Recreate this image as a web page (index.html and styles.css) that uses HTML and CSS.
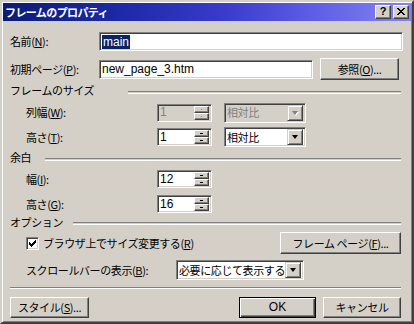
FILE: index.html
```html
<!DOCTYPE html>
<html lang="ja">
<head>
<meta charset="utf-8">
<title>フレームのプロパティ</title>
<link rel="stylesheet" href="styles.css">
</head>
<body>
<div class="win">
  <div class="title">
    <span class="ttext">フレームのプロパティ</span>
    <div class="tbtns">
      <span class="tb q">?</span>
      <span class="tb">
        <svg width="8" height="7" viewBox="0 0 8 7"><path d="M0 0h2v1h-2zM6 0h2v1h-2zM1 1h2v1h-2zM5 1h2v1h-2zM2 2h4v1h-4zM3 3h2v1h-2zM2 4h4v1h-4zM1 5h2v1h-2zM5 5h2v1h-2zM0 6h2v1h-2zM6 6h2v1h-2z" fill="#000"/></svg>
      </span>
    </div>
  </div>
  <div class="body">
    <div class="row r1">
      <span class="lbl w-a">名前(<u>N</u>):</span>
      <div class="field f-name"><span class="sel lat">main</span></div>
    </div>
    <div class="row r2">
      <span class="lbl w-a">初期ページ(<u>P</u>):</span>
      <div class="field f-page"><span class="lat">new_page_3.htm</span></div>
      <div class="btn b-browse">参照(<u>O</u>)...</div>
    </div>
    <div class="hdr h1"><span class="htext">フレームのサイズ</span><i class="etch e1"></i></div>
    <div class="row r3">
      <span class="lbl ind w-b">列幅(<u>W</u>):</span>
      <div class="spin dis">
        <span class="lat">1</span>
        <div class="arrows"><i class="ab"><b></b></i><i class="ab dn"><b></b></i></div>
      </div>
      <div class="combo dis c-rel">
        <span class="ctext">相対比</span>
        <i class="cbtn"><b></b></i>
      </div>
    </div>
    <div class="row r4">
      <span class="lbl ind w-b">高さ(<u>T</u>):</span>
      <div class="spin">
        <span class="lat">1</span>
        <div class="arrows"><i class="ab"><b></b></i><i class="ab dn"><b></b></i></div>
      </div>
      <div class="combo c-rel">
        <span class="ctext">相対比</span>
        <i class="cbtn"><b></b></i>
      </div>
    </div>
    <div class="hdr h2"><span class="htext">余白</span><i class="etch e2"></i></div>
    <div class="row r5">
      <span class="lbl ind w-b">幅(<u>I</u>):</span>
      <div class="spin">
        <span class="lat">12</span>
        <div class="arrows"><i class="ab"><b></b></i><i class="ab dn"><b></b></i></div>
      </div>
    </div>
    <div class="row r6">
      <span class="lbl ind w-b">高さ(<u>G</u>):</span>
      <div class="spin">
        <span class="lat">16</span>
        <div class="arrows"><i class="ab"><b></b></i><i class="ab dn"><b></b></i></div>
      </div>
    </div>
    <div class="hdr h3"><span class="htext">オプション</span><i class="etch e3"></i></div>
    <div class="row r7">
      <span class="chk">
        <svg width="7" height="7" viewBox="0 0 7 7"><path d="M0 2h1v3h-1zM1 3h1v3h-1zM2 4h1v3h-1zM3 3h1v3h-1zM4 2h1v3h-1zM5 1h1v3h-1zM6 0h1v3h-1z" fill="#000"/></svg>
      </span>
      <span class="chklbl">ブラウザ上でサイズ変更する(<u>R</u>)</span>
      <div class="btn b-frame">フレーム ページ(<u>F</u>)...</div>
    </div>
    <div class="row r8">
      <span class="lbl ind w-c">スクロールバーの表示(<u>B</u>):</span>
      <div class="combo c-scroll">
        <span class="ctext">必要に応じて表示する</span>
        <i class="cbtn"><b></b></i>
      </div>
    </div>
    <i class="sep"></i>
    <div class="row r9">
      <div class="btn b-style">スタイル(<u>S</u>)...</div>
      <div class="btn def b-ok"><span class="lat">OK</span></div>
      <div class="btn b-cancel">キャンセル</div>
    </div>
  </div>
</div>
</body>
</html>
```

FILE: styles.css
```css
html, body {
  margin: 0;
  padding: 0;
  background: #d4d0c8;
}
.win {
  box-sizing: border-box;
  width: 414px;
  height: 324px;
  background: #d4d0c8;
  border: 2px solid;
  border-color: #d4d0c8 #404040 #404040 #d4d0c8;
  box-shadow: inset 1px 1px #ffffff, inset -1px -1px #808080;
  padding: 1px;
  font-family: "Noto Sans CJK JP", sans-serif;
  font-size: 11px;
  line-height: 13px;
  color: #000;
  letter-spacing: -0.4px;
}
u { text-decoration: underline; text-underline-offset: 1px; }
.lat {
  font-family: "Liberation Sans", Arial, sans-serif;
  font-size: 12px;
  letter-spacing: 0;
}
.title {
  height: 18px;
  display: flex;
  align-items: center;
  background: linear-gradient(90deg, #0c1c74 0%, #1e2aa8 30%, #3a3ccc 55%, #5c5ce4 75%, #8484f2 100%);
}
.ttext {
  color: #fff;
  font-weight: bold;
  padding-left: 2px;
  flex: 1;
  letter-spacing: -0.6px;
}
.tbtns {
  display: flex;
  margin-right: 2px;
  gap: 2px;
}
.tb {
  box-sizing: border-box;
  width: 16px;
  height: 14px;
  background: #d4d0c8;
  border: 1px solid;
  border-color: #fff #404040 #404040 #fff;
  box-shadow: inset -1px -1px #808080;
  display: flex;
  align-items: center;
  justify-content: center;
}
.tb.q {
  font-family: "Liberation Sans", Arial, sans-serif;
  font-weight: bold;
  font-size: 11px;
  line-height: 11px;
  padding-bottom: 1px;
}
.tb svg { display: block; margin-bottom: 1px; }

.body {
  padding-left: 7px;
  display: flex;
  flex-direction: column;
}
.row {
  display: flex;
  align-items: center;
}
.lbl { flex: none; }
.ind { margin-left: 16px; }
.w-a { width: 89px; }
.w-b { width: 131px; }
.w-c { width: 150px; }

.field, .spin, .combo {
  box-sizing: border-box;
  background: #fff;
  border: 1px solid;
  border-color: #808080 #fff #fff #808080;
  box-shadow: inset 1px 1px #404040, inset -1px -1px #d4d0c8;
  display: flex;
  align-items: center;
  padding-left: 2px;
}
.r1 { margin-top: 11px; height: 19px; }
.f-name { width: 304px; height: 19px; }
.sel {
  background: #0a246a;
  color: #fff;
  padding: 0 1px;
  line-height: 14px;
}
.r2 { margin-top: 7px; height: 22px; }
.f-page { width: 214px; height: 19px; }
.btn {
  box-sizing: border-box;
  background: #d4d0c8;
  border: 1px solid;
  border-color: #fff #404040 #404040 #fff;
  box-shadow: inset -1px -1px #808080;
  display: flex;
  align-items: center;
  justify-content: center;
}
.b-browse { width: 79px; height: 22px; margin-left: 7px; }

.hdr {
  display: flex;
  align-items: flex-start;
  height: 13px;
}
.etch {
  flex: 1;
  height: 1px;
  border-top: 1px solid #808080;
  border-bottom: 1px solid #fff;
  margin-right: 10px;
}
.h1 { margin-top: 4px; }
.e1 { margin-left: 34px; margin-top: 7px; }
.h2 { margin-top: 4px; }
.e2 { margin-left: 14px; margin-top: 7px; }
.h3 { margin-top: 3px; }
.e3 { margin-left: 10px; margin-top: 6px; }

.r3 { margin-top: 6px; height: 19px; }
.r4 { margin-top: 5px; height: 20px; }
.r5 { margin-top: 6px; height: 18px; }
.r6 { margin-top: 7px; height: 18px; }

.spin {
  width: 55px;
  height: 18px;
  justify-content: space-between;
  padding-right: 2px;
}
.spin.dis, .combo.dis { background: #d4d0c8; color: #808080; }
.arrows {
  display: flex;
  flex-direction: column;
  width: 15px;
  height: 14px;
}
.ab {
  box-sizing: border-box;
  flex: 1;
  background: #d4d0c8;
  border: 1px solid;
  border-color: #fff #404040 #404040 #fff;
  box-shadow: inset -1px -1px #808080;
  display: flex;
  align-items: center;
  justify-content: center;
}
.ab b {
  width: 1px;
  height: 1px;
  background: #000;
  box-shadow: -1px 0 #000, 1px 0 #000;
}
.dis .ab b { background: #808080; box-shadow: none; }

.combo {
  height: 20px;
  justify-content: space-between;
  padding-right: 2px;
}
.c-rel { width: 82px; margin-left: 12px; }
.cbtn {
  box-sizing: border-box;
  width: 16px;
  height: 16px;
  background: #d4d0c8;
  border: 1px solid;
  border-color: #d4d0c8 #404040 #404040 #d4d0c8;
  box-shadow: inset 1px 1px #fff, inset -1px -1px #808080;
  display: flex;
  align-items: center;
  justify-content: center;
}
.cbtn b {
  width: 0;
  height: 0;
  border-left: 3.5px solid transparent;
  border-right: 3.5px solid transparent;
  border-top: 4px solid #000;
}
.dis .cbtn b { border-top-color: #808080; filter: drop-shadow(1px 1px 0 #fff); }

.r7 { margin-top: 3px; height: 22px; }
.chk {
  box-sizing: border-box;
  width: 13px;
  height: 13px;
  margin-left: 16px;
  background: #fff;
  border: 1px solid;
  border-color: #808080 #fff #fff #808080;
  box-shadow: inset 1px 1px #404040, inset -1px -1px #d4d0c8;
  display: flex;
  align-items: center;
  justify-content: center;
}
.chklbl { margin-left: 4px; flex: 1; }
.b-frame { width: 121px; height: 22px; margin-right: 10px; }

.r8 { margin-top: 6px; height: 20px; }
.c-scroll { width: 128px; }

.sep {
  display: block;
  height: 0;
  border-top: 1px solid #808080;
  border-bottom: 1px solid #fff;
  margin-top: 7px;
  margin-right: 10px;
}
.r9 { margin-top: 8px; height: 21px; }
.b-style { width: 79px; height: 21px; }
.b-ok { width: 77px; height: 21px; margin-left: 150px; }
.btn.def {
  border: 1px solid #000;
  box-shadow: inset 1px 1px #fff, inset -1px -1px #404040, inset -2px -2px #808080;
}
.b-cancel { width: 78px; height: 21px; margin-left: 7px; }
```
